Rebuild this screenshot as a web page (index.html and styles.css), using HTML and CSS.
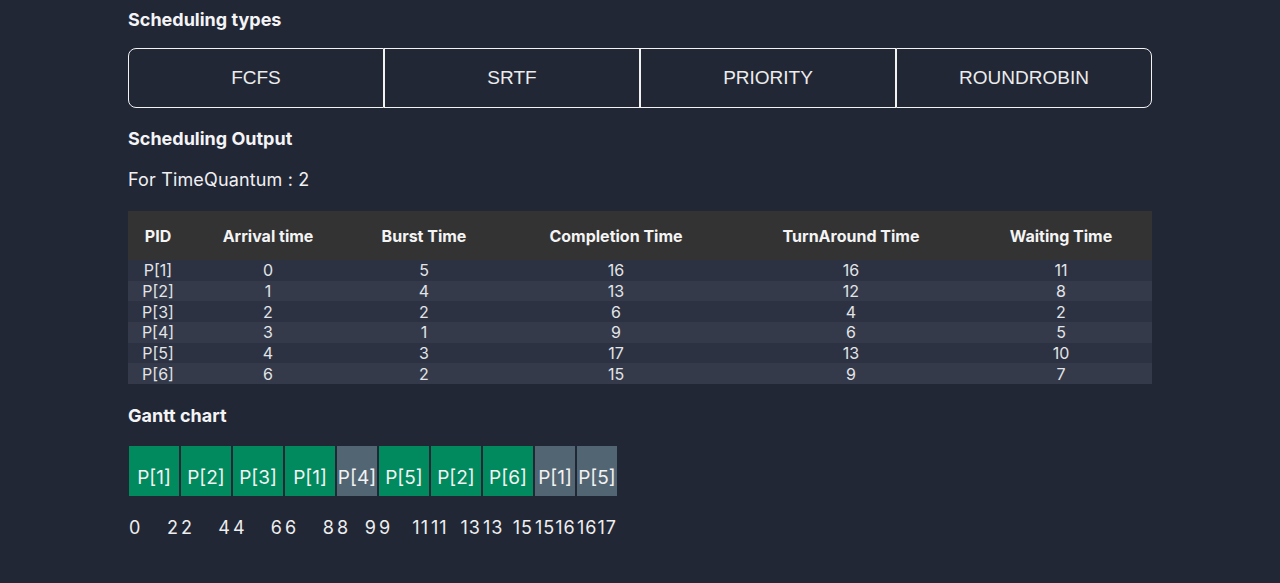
FILE: index.html
```html
<!DOCTYPE html>
<html>
<head>
<meta charset="utf-8">
<link rel="stylesheet" href="styles.css">
</head>
<body>
<div class="page">
  <h2 class="title">Scheduling types</h2>
  <div class="types">
    <button class="type first">FCFS</button>
    <button class="type">SRTF</button>
    <button class="type">PRIORITY</button>
    <button class="type last">ROUNDROBIN</button>
  </div>

  <h2 class="title t2">Scheduling Output</h2>
  <p class="quantum">For TimeQuantum : 2</p>

  <table class="out">
    <colgroup>
      <col style="width:60px">
      <col style="width:160px">
      <col style="width:152px">
      <col style="width:232px">
      <col style="width:238px">
      <col style="width:182px">
    </colgroup>
    <thead>
      <tr><th>PID</th><th>Arrival time</th><th>Burst Time</th><th>Completion Time</th><th>TurnAround Time</th><th>Waiting Time</th></tr>
    </thead>
    <tbody>
      <tr><td>P[1]</td><td>0</td><td>5</td><td>16</td><td>16</td><td>11</td></tr>
      <tr><td>P[2]</td><td>1</td><td>4</td><td>13</td><td>12</td><td>8</td></tr>
      <tr><td>P[3]</td><td>2</td><td>2</td><td>6</td><td>4</td><td>2</td></tr>
      <tr><td>P[4]</td><td>3</td><td>1</td><td>9</td><td>6</td><td>5</td></tr>
      <tr><td>P[5]</td><td>4</td><td>3</td><td>17</td><td>13</td><td>10</td></tr>
      <tr><td>P[6]</td><td>6</td><td>2</td><td>15</td><td>9</td><td>7</td></tr>
    </tbody>
  </table>

  <h2 class="title t3">Gantt chart</h2>
  <div class="gantt">
    <div class="slot"><div class="bar green">P[1]</div><div class="times"><span>0</span><span>2</span></div></div>
    <div class="slot"><div class="bar green">P[2]</div><div class="times"><span>2</span><span>4</span></div></div>
    <div class="slot"><div class="bar green">P[3]</div><div class="times"><span>4</span><span>6</span></div></div>
    <div class="slot"><div class="bar green">P[1]</div><div class="times"><span>6</span><span>8</span></div></div>
    <div class="slot small"><div class="bar gray">P[4]</div><div class="times"><span>8</span><span>9</span></div></div>
    <div class="slot"><div class="bar green">P[5]</div><div class="times"><span>9</span><span>11</span></div></div>
    <div class="slot"><div class="bar green">P[2]</div><div class="times"><span>11</span><span>13</span></div></div>
    <div class="slot"><div class="bar green">P[6]</div><div class="times"><span>13</span><span>15</span></div></div>
    <div class="slot small"><div class="bar gray">P[1]</div><div class="times"><span>15</span><span>16</span></div></div>
    <div class="slot small"><div class="bar gray">P[5]</div><div class="times"><span>16</span><span>17</span></div></div>
  </div>
</div>
</body>
</html>
```
FILE: styles.css
```css
html, body {
  margin: 0;
  padding: 0;
  background: #222736;
  color: #ffffff;
  font-family: Inter, "Noto Sans", sans-serif;
}
.page {
  width: 1024px;
  margin: 0 auto;
  padding-top: 9px;
}
.title {
  margin: 0;
  font-size: 18px;
  line-height: 22px;
  font-weight: 700;
  color: #f4f4f6;
}
.types {
  display: flex;
  margin-top: 17px;
}
.type {
  flex: 0 0 256px;
  height: 60px;
  margin: 0;
  background: transparent;
  border: 1px solid #f2f2f2;
  color: #ececec;
  font-family: "Liberation Sans", Arial, sans-serif;
  font-size: 19px;
  padding: 0;
}
.type.first { border-radius: 8px 0 0 8px; }
.type.last { border-radius: 0 8px 8px 0; }
.t2 { margin-top: 20px; }
.quantum {
  margin: 18px 0 0;
  font-size: 18px;
  line-height: 24px;
  letter-spacing: 0.15px;
  color: #f0f0f2;
}
.out {
  margin-top: 19px;
  width: 1023px;
  border-collapse: collapse;
  table-layout: fixed;
}
.out th {
  background: #333333;
  height: 49px;
  padding: 0;
  font-size: 16px;
  font-weight: 700;
  color: #f4f4f4;
  text-align: center;
}
.out td {
  padding: 0;
  height: 20.7px;
  line-height: 20px;
  font-size: 16px;
  color: #e2e4e8;
  text-align: center;
}
.out tbody tr:nth-child(odd) td { background: #2c3242; }
.out tbody tr:nth-child(even) td { background: #343a4a; }
.t3 { margin-top: 21px; }
.gantt {
  display: flex;
  margin-top: 19px;
}
.slot {
  width: 50px;
  margin: 0 1px;
}
.slot.small { width: 40px; }
.bar {
  height: 50px;
  box-sizing: border-box;
  padding-top: 12px;
  display: flex;
  align-items: center;
  justify-content: center;
  font-size: 19px;
  color: #f2f2f2;
  white-space: nowrap;
}
.bar.green { background: #008a5e; }
.bar.gray { background: #526573; }
.times {
  display: flex;
  justify-content: space-between;
  margin-top: 20px;
  font-size: 18px;
  line-height: 24px;
  letter-spacing: 1px;
  color: #eeeeee;
}
```
